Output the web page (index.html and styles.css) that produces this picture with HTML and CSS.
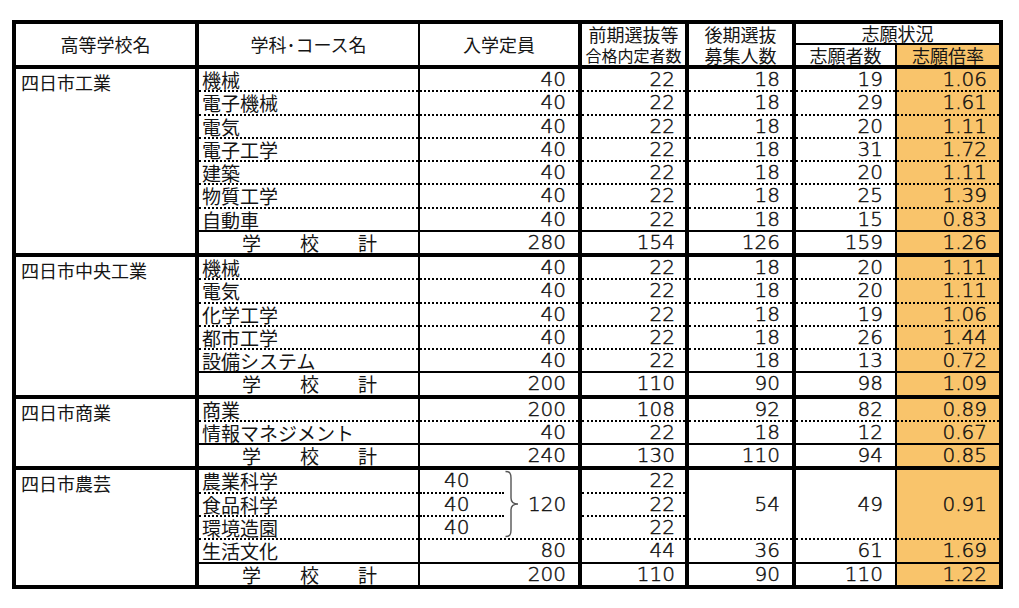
FILE: index.html
```html
<!DOCTYPE html>
<html lang="ja">
<head>
<meta charset="utf-8">
<title>志願状況</title>
<link rel="stylesheet" href="styles.css">
</head>
<body>
<table class="sheet">
  <colgroup>
    <col class="w1"><col class="w2"><col class="w3"><col class="w4"><col class="w5"><col class="w6"><col class="w7">
  </colgroup>
  <thead>
    <tr class="h1">
      <th class="c1 hb" rowspan="2">高等学校名</th>
      <th class="c2 hb" rowspan="2">学科･コース名</th>
      <th class="c3 hb" rowspan="2">入学定員</th>
      <th class="c4 hb two" rowspan="2"><div class="l1">前期選抜等</div><div class="l2 small">合格内定者数</div></th>
      <th class="c5 hb two" rowspan="2"><div class="l1">後期選抜</div><div class="l2">募集人数</div></th>
      <th class="c7 top" colspan="2">志願状況</th>
    </tr>
    <tr class="h2">
      <th class="c6 hb">志願者数</th>
      <th class="c7 hb or">志願倍率</th>
    </tr>
  </thead>
  <tbody>
    <tr class="r">
      <td class="c1 school" rowspan="8">四日市工業</td>
      <td class="c2 name">機械</td><td class="c3 n">40</td><td class="c4 n">22</td><td class="c5 n">18</td><td class="c6 n">19</td><td class="c7 n or">1.06</td>
    </tr>
    <tr class="r"><td class="c2 name">電子機械</td><td class="c3 n">40</td><td class="c4 n">22</td><td class="c5 n">18</td><td class="c6 n">29</td><td class="c7 n or">1.61</td></tr>
    <tr class="r"><td class="c2 name">電気</td><td class="c3 n">40</td><td class="c4 n">22</td><td class="c5 n">18</td><td class="c6 n">20</td><td class="c7 n or">1.11</td></tr>
    <tr class="r"><td class="c2 name">電子工学</td><td class="c3 n">40</td><td class="c4 n">22</td><td class="c5 n">18</td><td class="c6 n">31</td><td class="c7 n or">1.72</td></tr>
    <tr class="r"><td class="c2 name">建築</td><td class="c3 n">40</td><td class="c4 n">22</td><td class="c5 n">18</td><td class="c6 n">20</td><td class="c7 n or">1.11</td></tr>
    <tr class="r"><td class="c2 name">物質工学</td><td class="c3 n">40</td><td class="c4 n">22</td><td class="c5 n">18</td><td class="c6 n">25</td><td class="c7 n or">1.39</td></tr>
    <tr class="pre"><td class="c2 name">自動車</td><td class="c3 n">40</td><td class="c4 n">22</td><td class="c5 n">18</td><td class="c6 n">15</td><td class="c7 n or">0.83</td></tr>
    <tr class="tot"><td class="c2"><div class="kei"><span>学</span><span>校</span><span>計</span></div></td><td class="c3 n">280</td><td class="c4 n">154</td><td class="c5 n">126</td><td class="c6 n">159</td><td class="c7 n or">1.26</td></tr>

    <tr class="r">
      <td class="c1 school" rowspan="6">四日市中央工業</td>
      <td class="c2 name">機械</td><td class="c3 n">40</td><td class="c4 n">22</td><td class="c5 n">18</td><td class="c6 n">20</td><td class="c7 n or">1.11</td>
    </tr>
    <tr class="r"><td class="c2 name">電気</td><td class="c3 n">40</td><td class="c4 n">22</td><td class="c5 n">18</td><td class="c6 n">20</td><td class="c7 n or">1.11</td></tr>
    <tr class="r"><td class="c2 name">化学工学</td><td class="c3 n">40</td><td class="c4 n">22</td><td class="c5 n">18</td><td class="c6 n">19</td><td class="c7 n or">1.06</td></tr>
    <tr class="r"><td class="c2 name">都市工学</td><td class="c3 n">40</td><td class="c4 n">22</td><td class="c5 n">18</td><td class="c6 n">26</td><td class="c7 n or">1.44</td></tr>
    <tr class="pre"><td class="c2 name">設備システム</td><td class="c3 n">40</td><td class="c4 n">22</td><td class="c5 n">18</td><td class="c6 n">13</td><td class="c7 n or">0.72</td></tr>
    <tr class="tot"><td class="c2"><div class="kei"><span>学</span><span>校</span><span>計</span></div></td><td class="c3 n">200</td><td class="c4 n">110</td><td class="c5 n">90</td><td class="c6 n">98</td><td class="c7 n or">1.09</td></tr>

    <tr class="r">
      <td class="c1 school" rowspan="3">四日市商業</td>
      <td class="c2 name">商業</td><td class="c3 n">200</td><td class="c4 n">108</td><td class="c5 n">92</td><td class="c6 n">82</td><td class="c7 n or">0.89</td>
    </tr>
    <tr class="pre"><td class="c2 name">情報マネジメント</td><td class="c3 n">40</td><td class="c4 n">22</td><td class="c5 n">18</td><td class="c6 n">12</td><td class="c7 n or">0.67</td></tr>
    <tr class="tot"><td class="c2"><div class="kei"><span>学</span><span>校</span><span>計</span></div></td><td class="c3 n">240</td><td class="c4 n">130</td><td class="c5 n">110</td><td class="c6 n">94</td><td class="c7 n or">0.85</td></tr>

    <tr class="r">
      <td class="c1 school" rowspan="5">四日市農芸</td>
      <td class="c2 name">農業科学</td>
      <td class="c3 group" rowspan="3">
        <div class="grp">
          <div class="subs">
            <div class="sub">40</div>
            <div class="sub">40</div>
            <div class="sub last">40</div>
          </div>
          <svg class="brace" width="16" height="68" viewBox="0 0 16 68" aria-hidden="true">
            <path d="M1.5 1.5 C6 1.5 7 3.5 7 8 L7 28 C7 32 9 34 14 34 C9 34 7 36 7 40 L7 60 C7 64.5 6 66.5 1.5 66.5" fill="none" stroke="#555" stroke-width="1.4"/>
          </svg>
          <div class="gsum">120</div>
        </div>
      </td>
      <td class="c4 n">22</td>
      <td class="c5 n mid" rowspan="3">54</td>
      <td class="c6 n mid" rowspan="3">49</td>
      <td class="c7 n or mid" rowspan="3">0.91</td>
    </tr>
    <tr class="r"><td class="c2 name">食品科学</td><td class="c4 n">22</td></tr>
    <tr class="r"><td class="c2 name">環境造園</td><td class="c4 n">22</td></tr>
    <tr class="pre"><td class="c2 name">生活文化</td><td class="c3 n">80</td><td class="c4 n">44</td><td class="c5 n">36</td><td class="c6 n">61</td><td class="c7 n or">1.69</td></tr>
    <tr class="tot end"><td class="c2"><div class="kei"><span>学</span><span>校</span><span>計</span></div></td><td class="c3 n">200</td><td class="c4 n">110</td><td class="c5 n">90</td><td class="c6 n">110</td><td class="c7 n or">1.22</td></tr>
  </tbody>
</table>
</body>
</html>
```
FILE: styles.css
```css
html, body {
  margin: 0;
  padding: 0;
  background: #ffffff;
}

body {
  font-family: "Noto Sans CJK JP", "Noto Sans", sans-serif;
  color: #151515;
}

.sheet {
  margin: 20px 0 0 12px;
  border-collapse: collapse;
  table-layout: fixed;
  width: 990px;
  border: 4px solid #000;
}

.w1 { width: 183px; }
.w2 { width: 222px; }
.w3 { width: 161px; }
.w4 { width: 107px; }
.w5 { width: 107px; }
.w6 { width: 102px; }
.w7 { width: 105px; }

th, td {
  padding: 0;
  overflow: visible;
  white-space: nowrap;
}

th {
  font-weight: 400;
  font-size: 18px;
  text-align: center;
  vertical-align: middle;
  line-height: 19px;
}

.h1 th { height: 19px; }
.h2 th { height: 20px; }

.hb { border-bottom: 4px solid #000; }
.top { border-bottom: 2px solid #000; }

.two .l1 { line-height: 21px; }
.two .l2 { line-height: 20px; }
.two .small { font-size: 16px; }

.c1 { border-right: 4px solid #000; }
.c2 { border-right: 2px solid #000; }
.c3 { border-right: 4px solid #000; }
.c4 { border-right: 4px solid #000; }
.c5 { border-right: 4px solid #000; }
.c6 { border-right: 2px solid #000; }

td {
  font-size: 19px;
  line-height: 21.25px;
  height: 21.25px;
  vertical-align: middle;
}

.r td { border-bottom: 2px dotted #000; }
.pre td { border-bottom: 2px solid #000; }
.tot td { border-bottom: 4px solid #000; }

.sheet td.school {
  vertical-align: top;
  padding-left: 5px;
  font-size: 18px;
  padding-top: 3px;
  border-bottom: 4px solid #000;
}

.name {
  padding-left: 3px;
}

.n, .sub, .gsum {
  font-family: "DejaVu Sans", "Noto Sans", sans-serif;
  font-weight: 200;
  font-size: 20px;
  color: #111;
  -webkit-text-stroke: 0.45px #111;
}

.n {
  text-align: right;
  padding-right: 12px;
  line-height: 21.25px;
}

.c4.n { padding-right: 10px; }

.mid { vertical-align: middle; }

.or { background: #f9c46b; }

.kei {
  display: flex;
  padding-left: 43px;
}
.kei span + span { margin-left: 39px; }

.group {
  vertical-align: top;
  padding: 0;
}

.grp {
  display: flex;
  align-items: stretch;
}

.subs {
  width: 84px;
  display: flex;
  flex-direction: column;
}

.sub {
  line-height: 21.25px;
  height: 21.25px;
  padding-left: 24px;
  border-bottom: 2px dotted #000;
}

.sub.last { border-bottom: none; }

.brace {
  flex: none;
  display: block;
}

.gsum {
  align-self: center;
  margin-left: 8px;
  line-height: 22px;
}
```
